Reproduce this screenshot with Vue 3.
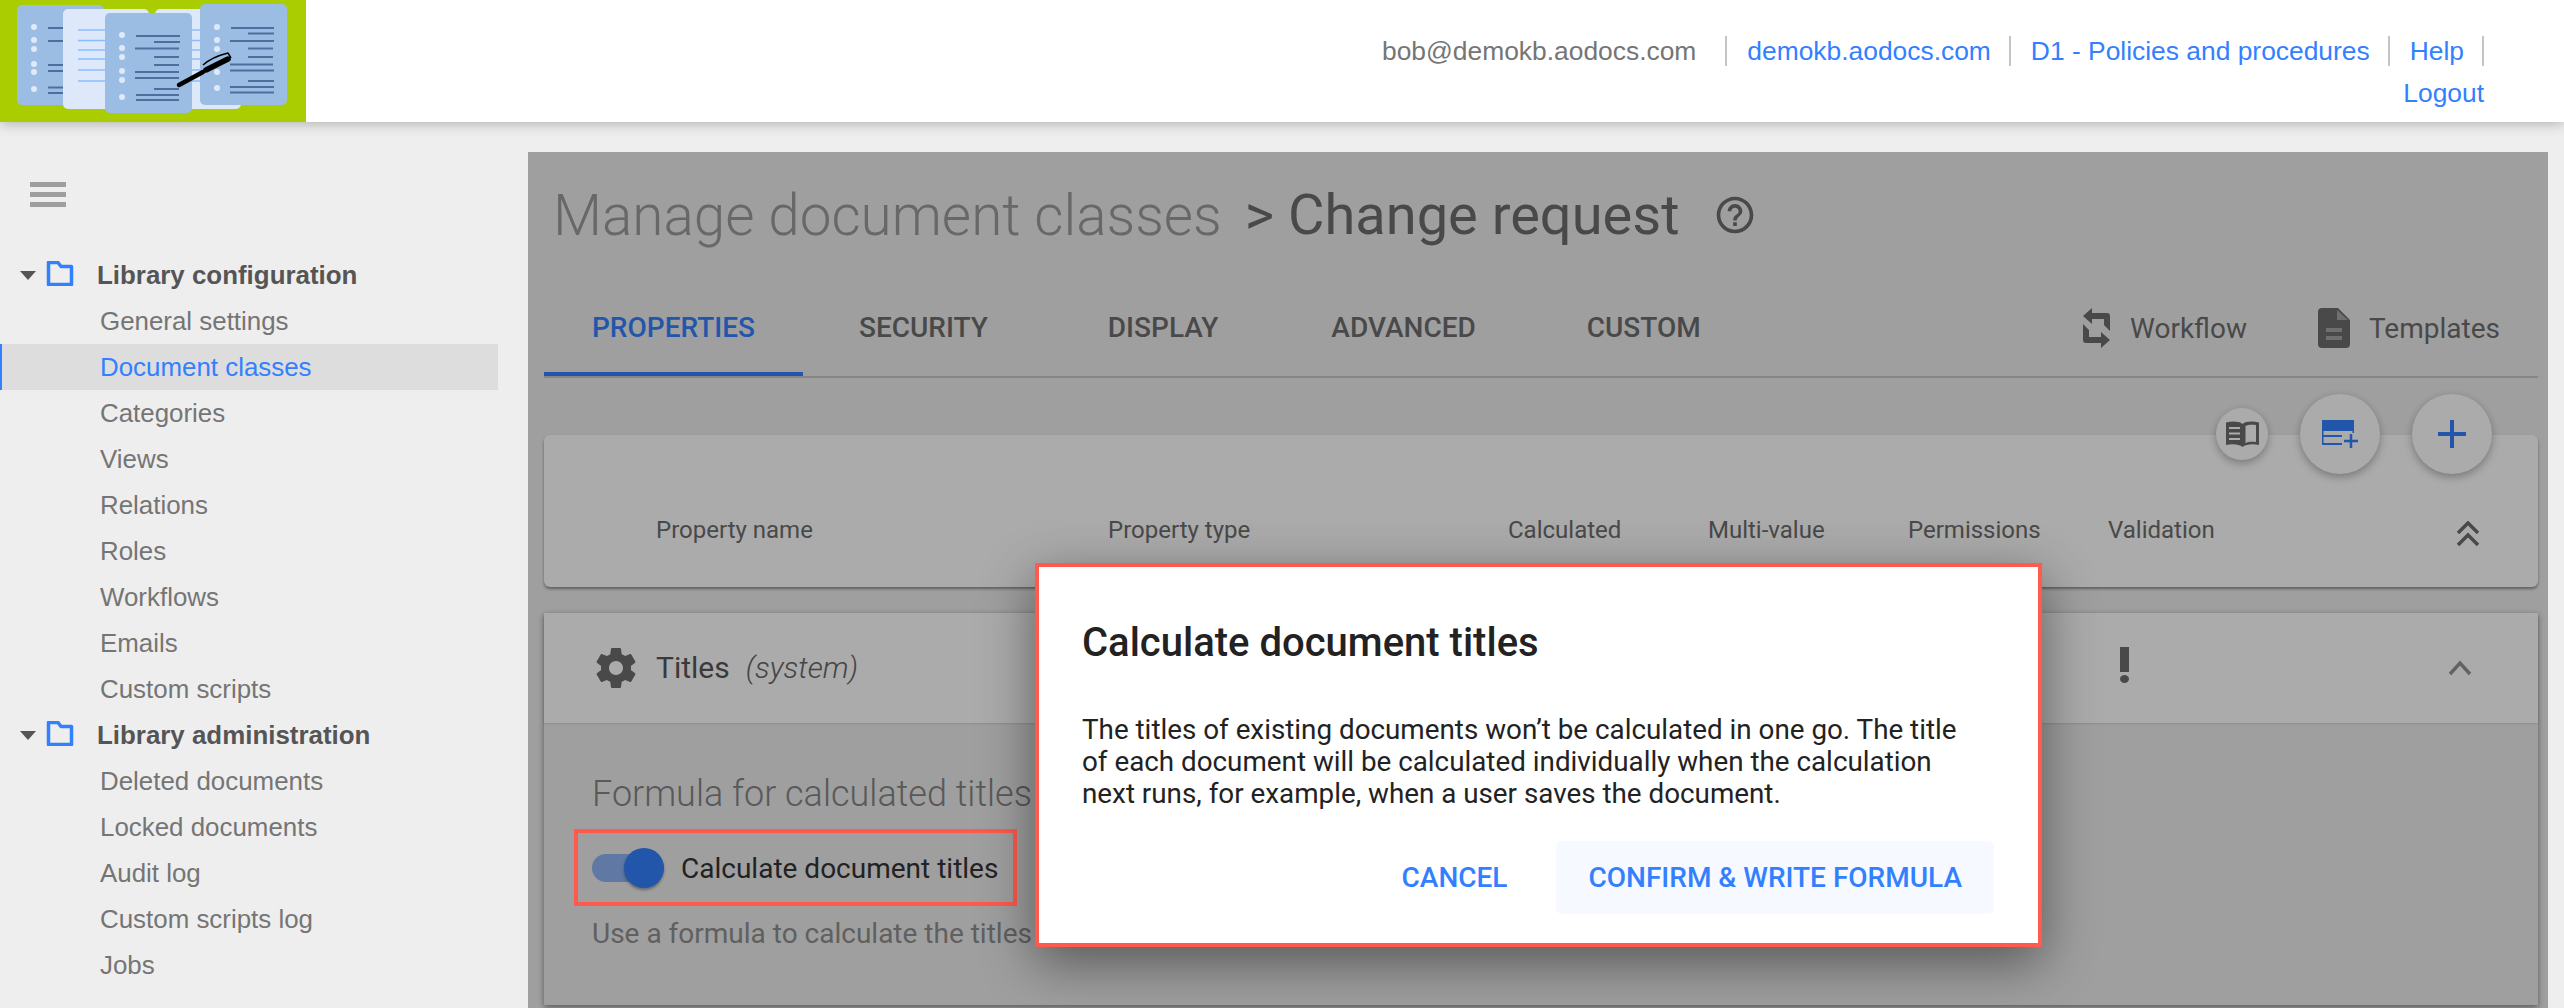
<script setup>
const configItems = ['General settings', 'Document classes', 'Categories', 'Views', 'Relations', 'Roles', 'Workflows', 'Emails', 'Custom scripts']
const adminItems = ['Deleted documents', 'Locked documents', 'Audit log', 'Custom scripts log', 'Jobs']
const tabs = ['PROPERTIES', 'SECURITY', 'DISPLAY', 'ADVANCED', 'CUSTOM']
const columns = ['Property name', 'Property type', 'Calculated', 'Multi-value', 'Permissions', 'Validation']
const ys = {
  s1: [28, 41, 65, 71, 87.5, 93],
  s2: [30, 40.5, 50, 59, 70, 81],
  d1: [27, 40, 49, 64, 72, 89],
  d3: [35, 48, 57, 71, 80, 97],
  d5: [27, 40, 49, 72, 88]
}
const s3Lines = [[136, 180, 36], [154, 180, 42], [135, 179, 48.5], [154, 179, 57], [154, 179, 65], [135, 179, 72], [135, 179, 78], [154, 179, 89], [136, 179, 95], [136, 179, 100]]
const s5Lines = [[231, 274, 28], [248, 274, 33.5], [230, 274, 41], [248, 273, 48.5], [248, 273, 57], [230, 273, 64.5], [230, 274, 70.5], [248, 274, 81], [230, 274, 87], [230, 274, 92.5]]
</script>

<template>
  <div class="page">
    <header class="topbar">
      <svg class="logo" width="306" height="122" viewBox="0 0 306 122">
        <rect width="306" height="122" fill="#a9cd00" />
        <rect x="17" y="5" width="87" height="100" rx="5" fill="#9bbde3" />
        <g fill="#dfe9fa"><circle v-for="y in ys.d1" :key="y" cx="34" :cy="y" r="3" /></g>
        <g stroke="#4d6f9e" stroke-width="2"><line v-for="y in ys.s1" :key="y" x1="48" x2="64" :y1="y" :y2="y" /></g>
        <rect x="63" y="9" width="86" height="100" rx="5" fill="#dde8fb" />
        <rect x="155" y="9" width="86" height="100" rx="5" fill="#dde8fb" />
        <g stroke="#88bcff" stroke-width="1.5">
          <line v-for="y in ys.s2" :key="y" x1="78" x2="108" :y1="y" :y2="y" />
          <line v-for="y in ys.s2" :key="'r' + y" x1="190" x2="202" :y1="y" :y2="y" />
        </g>
        <rect x="105" y="13" width="87" height="100" rx="5" fill="#9bbde3" />
        <g fill="#dfe9fa"><circle v-for="y in ys.d3" :key="y" cx="122" :cy="y" r="3" /></g>
        <g stroke="#4d6f9e" stroke-width="2"><line v-for="l in s3Lines" :key="l[2]" :x1="l[0]" :x2="l[1]" :y1="l[2]" :y2="l[2]" /></g>
        <rect x="200" y="4" width="87" height="101" rx="5" fill="#9bbde3" />
        <g fill="#dfe9fa"><circle v-for="y in ys.d5" :key="y" cx="217" :cy="y" r="3" /></g>
        <g stroke="#4d6f9e" stroke-width="2"><line v-for="l in s5Lines" :key="l[2]" :x1="l[0]" :x2="l[1]" :y1="l[2]" :y2="l[2]" /></g>
        <path d="M179 85 L203 72" stroke="#000" stroke-width="4.5" stroke-linecap="round" />
        <path d="M206 70 L228 59" stroke="#000" stroke-width="5.5" stroke-linecap="round" />
        <path d="M203 65 Q212 57 228 53 L231 58" stroke="#000" stroke-width="1.5" fill="none" />
      </svg>
      <nav class="usernav">
        <span class="nav-item nav-user">bob@demokb.aodocs.com</span>
        <a class="nav-item">demokb.aodocs.com</a>
        <a class="nav-item">D1 - Policies and procedures</a>
        <a class="nav-item">Help</a>
        <a class="nav-item nav-last">Logout</a>
      </nav>
    </header>

    <div class="content">
      <aside class="sidebar">
        <div class="hamburger"><i></i><i></i><i></i></div>
        <section class="group">
          <div class="group-head">
            <span class="caret"></span>
            <svg class="folder" width="28" height="25" viewBox="0 0 28 25"><path d="M2.5 23.500V1.500H12l3 4h10.500V23.500Z" fill="none" stroke="#3380ff" stroke-width="3.500" stroke-linejoin="round" /></svg>
            <span>Library configuration</span>
          </div>
          <a v-for="item in configItems" :key="item" class="side-item" :class="{ active: item === 'Document classes' }">{{ item }}</a>
        </section>
        <section class="group">
          <div class="group-head">
            <span class="caret"></span>
            <svg class="folder" width="28" height="25" viewBox="0 0 28 25"><path d="M2.5 23.500V1.500H12l3 4h10.500V23.500Z" fill="none" stroke="#3380ff" stroke-width="3.500" stroke-linejoin="round" /></svg>
            <span>Library administration</span>
          </div>
          <a v-for="item in adminItems" :key="item" class="side-item">{{ item }}</a>
        </section>
      </aside>

      <main class="main">
        <h1 class="title">
          <span class="crumb">Manage document classes</span>
          <span class="current">&gt; Change request</span>
          <svg class="help" width="44" height="44" viewBox="0 0 24 24"><path fill="#6e6e6e" d="M11 18h2v-2h-2v2zm1-16C6.480 2 2 6.480 2 12s4.480 10 10 10 10-4.480 10-10S17.520 2 12 2zm0 18c-4.410 0-8-3.590-8-8s3.590-8 8-8 8 3.590 8 8-3.590 8-8 8zm0-14c-2.210 0-4 1.790-4 4h2c0-1.100.9-2 2-2s2 .9 2 2c0 2-3 1.750-3 5h2c0-2.250 3-2.500 3-5 0-2.210-1.790-4-4-4z" /></svg>
        </h1>

        <div class="tabbar">
          <div v-for="tab in tabs" :key="tab" class="tab" :class="{ selected: tab === 'PROPERTIES' }">{{ tab }}</div>
          <div class="tab-actions">
            <span class="action">
              <svg width="28" height="40" viewBox="0 0 28 40"><path fill="#6e6e6e" d="M0 8L9 0V5H24Q27 5 27 8V23L21 17V11H9V16ZM0 16L6 22V29H18V24L27 32 18 40V35H3Q0 35 0 32Z" /></svg>
              <span class="action-label">Workflow</span>
            </span>
            <span class="action">
              <svg width="32" height="40" viewBox="0 0 32 40"><path fill="#6e6e6e" d="M4 0H20L32 12V36a4 4 0 0 1-4 4H4a4 4 0 0 1-4-4V4a4 4 0 0 1 4-4Z" /><path fill="#a6a6a6" d="M19 2v10h11L19 2ZM8 20h16v4H8zM8 28h16v4H8z" /></svg>
              Templates
            </span>
          </div>
        </div>

        <div class="fabs">
          <button class="fab fab-small">
            <svg width="33" height="26" viewBox="0 0 33 26"><path fill="#6e6e6e" d="M16.500 3C13 0 6 0 0 1.500V24C6 22.500 13 23 16.500 26 20 23 27 22.500 33 24V1.500C27 0 20 0 16.500 3Z" /><path fill="#fff" d="M19.500 5C22 3.500 26 3.500 30 4V21C26 20.500 22 20.500 19.500 22Z" /><path stroke="#fff" stroke-width="2" d="M3 7H14M3 12.500H14M3 18H14" /></svg>
          </button>
          <button class="fab">
            <svg width="36" height="28" viewBox="0 0 36 28"><path fill="#3380ff" d="M0 0H32V11H0Z" /><path fill="none" stroke="#3380ff" stroke-width="1.500" d="M.75 10V25M31.250 10V13" /><path stroke="#3380ff" stroke-width="2" d="M0 16H20M0 24H20" /><path stroke="#3380ff" stroke-width="2.500" d="M29 14V28M22 21H36" /></svg>
          </button>
          <button class="fab">
            <svg width="28" height="28" viewBox="0 0 28 28"><path stroke="#3380ff" stroke-width="4" d="M14 0V28M0 14H28" /></svg>
          </button>
        </div>

        <section class="card columns-card">
          <div class="columns">
            <span v-for="col in columns" :key="col">{{ col }}</span>
          </div>
          <svg class="double-chevron" width="24" height="26" viewBox="0 0 24 26"><path fill="none" stroke="#6e6e6e" stroke-width="3.500" d="M2 12L12 2l10 10M2 24l10-10 10 10" /></svg>
        </section>

        <section class="card titles-card">
          <div class="titles-head">
            <svg width="40" height="40" viewBox="2 2 20 20"><path fill="#6e6e6e" d="M19.430 12.980c.04-.32.07-.64.07-.98s-.03-.66-.07-.98l2.110-1.650c.19-.15.24-.42.12-.64l-2-3.460c-.12-.22-.39-.3-.61-.22l-2.490 1c-.52-.4-1.080-.73-1.690-.98l-.38-2.650C14.460 2.180 14.250 2 14 2h-4c-.25 0-.46.180-.49.420l-.38 2.650c-.61.25-1.170.59-1.690.98l-2.490-1c-.23-.09-.49 0-.61.220l-2 3.460c-.13.220-.07.490.12.640l2.110 1.650c-.04.320-.07.650-.07.980s.03.660.07.980l-2.110 1.650c-.19.150-.24.420-.12.640l2 3.460c.12.220.39.300.61.220l2.490-1c.52.400 1.080.730 1.690.980l.38 2.650c.03.240.24.420.49.420h4c.25 0 .46-.180.49-.420l.38-2.650c.61-.250 1.170-.590 1.690-.980l2.490 1c.23.090.49 0 .61-.220l2-3.460c.12-.220.07-.490-.12-.640l-2.110-1.650zM12 15.500c-1.930 0-3.500-1.570-3.500-3.500s1.570-3.500 3.500-3.500 3.500 1.570 3.500 3.500-1.570 3.500-3.500 3.500z" /></svg>
            <span class="titles-name">Titles</span>
            <em class="titles-note">(system)</em>
            <span class="bang"><i></i><b></b></span>
            <svg class="chevron-up" width="24" height="16" viewBox="0 0 24 16"><path fill="none" stroke="#949494" stroke-width="3.500" d="M2 14L12 3l10 11" /></svg>
          </div>
          <div class="titles-body">
            <h2>Formula for calculated titles</h2>
            <div class="toggle-row">
              <span class="toggle"><i></i></span>
              <span>Calculate document titles</span>
            </div>
            <p>Use a formula to calculate the titles of documents</p>
          </div>
        </section>

        <div class="scrim"></div>
        <div class="callout"></div>

        <div class="dialog">
          <h3>Calculate document titles</h3>
          <p>The titles of existing documents won’t be calculated in one go. The title of each document will be calculated individually when the calculation next runs, for example, when a user saves the document.</p>
          <div class="dialog-actions">
            <button class="btn">CANCEL</button>
            <button class="btn btn-tonal">CONFIRM &amp; WRITE FORMULA</button>
          </div>
        </div>
      </main>
    </div>
  </div>
</template>

<style>
html, body { margin: 0; background: #eee; overflow: hidden; }
</style>

<style scoped>
.page { width: 2564px; height: 1008px; background: #eee; overflow: hidden; display: flex; flex-direction: column; }

.topbar { height: 122px; flex: none; background: #fff; display: flex; justify-content: space-between; box-shadow: 0 2px 12px rgba(0, 0, 0, .25); position: relative; z-index: 2; }
.logo { display: block; }
.usernav { width: 1110px; margin: 36px 80px 0 0; display: flex; flex-wrap: wrap; justify-content: flex-end; align-content: flex-start; row-gap: 12px; font: 26.400px/30px "Liberation Sans", Arial, sans-serif; color: #3380ff; }
.nav-item { padding-right: 18px; margin-right: 20px; border-right: 2px solid #c4c4c4; white-space: nowrap; }
.usernav .nav-item:nth-child(4) { margin-right: 0; }
.nav-user { color: #757575; padding-right: 29px; }
.nav-last { border: 0; padding: 0; margin: 0; }

.content { flex: 1; display: flex; min-height: 0; }
.sidebar { width: 528px; flex: none; font: 25.900px/46px "Liberation Sans", Arial, sans-serif; color: #757575; box-sizing: border-box; padding-top: 60px; }
.hamburger { margin: 0 0 45px 30px; width: 36px; display: flex; flex-direction: column; gap: 5px; }
.hamburger i { height: 5px; background: #9e9e9e; display: block; }
.group-head { height: 46px; display: flex; align-items: center; color: #555; font-weight: 700; padding-left: 20px; }
.caret { width: 0; height: 0; border: 8px solid transparent; border-top: 9px solid #555; border-bottom: 0; margin-right: 10px; }
.folder { margin-right: 23px; margin-top: -4px; }
.side-item { display: block; height: 46px; padding-left: 100px; width: 498px; box-sizing: border-box; }
.side-item.active { background: #ddd; color: #3380ff; border-left: 2px solid #3380ff; padding-left: 98px; }

.main { width: 2020px; flex: none; margin-top: 30px; height: 856px; background: #eee; position: relative; overflow: hidden; box-sizing: border-box; padding: 0 10px 0 16px; font-family: Roboto, sans-serif; }
.title { margin: 0; height: 126px; padding-left: 9px; display: flex; align-items: center; font-size: 56.600px; font-weight: 300; white-space: nowrap; }
.crumb { color: #9c9c9c; }
.current { color: #6e6e6e; font-weight: 400; font-size: 56px; margin-left: 23px; }
.help { margin-left: 34px; }

.tabbar { height: 98px; display: flex; border-bottom: 2px solid #c8c8c8; font-size: 28px; font-weight: 500; color: #6e6e6e; }
.tab { padding: 30px 48px 0; box-sizing: border-box; height: 98px; line-height: 40px; }
.tab.selected { color: #3380ff; border-bottom: 4px solid #3380ff; }
.tab:nth-child(2) { margin-left: 8px; }
.tab:nth-child(3) { margin-left: 24px; }
.tab:nth-child(4) { margin-left: 17px; }
.tab:nth-child(5) { margin-left: 15px; }
.tab-actions { margin-left: auto; display: flex; gap: 71px; padding: 29px 38px 0 0; font-weight: 400; font-size: 28px; }
.action { display: flex; align-items: center; gap: 19px; height: 42px; }

.fabs { position: absolute; left: 1688px; top: 242px; width: 276px; height: 80px; display: flex; align-items: center; z-index: 1; }
.fab { width: 80px; height: 80px; border-radius: 50%; border: 0; background: #fff; box-shadow: 0 3px 8px rgba(0, 0, 0, .3); display: flex; align-items: center; justify-content: center; padding: 0; margin-left: 32px; flex: none; }
.fab-small { width: 52px; height: 52px; margin-left: 0; }

.card { background: #fff; border-radius: 6px; box-shadow: 0 2px 3px rgba(0, 0, 0, .4); }
.columns-card { height: 152px; margin-top: 57px; position: relative; }
.columns { display: grid; grid-template-columns: 452px 400px 200px 200px 200px 200px; padding: 79px 0 0 112px; font-size: 24px; line-height: 32px; color: #6e6e6e; }
.double-chevron { position: absolute; left: 1912px; top: 86px; }

.titles-card { margin-top: 26px; height: 392px; background: #eee; border-radius: 0; box-shadow: 0 2px 6px rgba(0, 0, 0, .45); }
.titles-head { height: 110px; background: #fff; display: flex; align-items: center; padding-left: 52px; font-size: 30px; color: #666; position: relative; box-shadow: 0 1px 2px rgba(0, 0, 0, .12); }
.titles-name { margin-left: 20px; margin-top: -2px; color: #575757; }
.titles-note { margin-left: 16px; margin-top: -2px; font-style: italic; font-weight: 300; }
.bang { position: absolute; left: 1576px; top: 34px; width: 9px; }
.bang i { display: block; height: 25px; background: #6e6e6e; }
.bang b { display: block; height: 8px; margin-top: 3px; border-radius: 50%; background: #6e6e6e; }
.chevron-up { position: absolute; left: 1904px; top: 47px; }
.titles-body { padding: 47px 0 0 48px; }
.titles-body h2 { margin: 0; font-size: 36px; line-height: 48px; font-weight: 300; color: #858585; white-space: nowrap; }
.toggle-row { margin-top: 26px; height: 48px; display: flex; align-items: center; gap: 17px; font-size: 28px; color: #333; }
.toggle { width: 72px; height: 28px; border-radius: 14px; background: #8eb5f5; position: relative; display: block; }
.toggle i { position: absolute; right: 0; top: -6px; width: 40px; height: 40px; border-radius: 50%; background: #3380ff; box-shadow: 0 2px 3px rgba(0, 0, 0, .35); }
.titles-body p { margin: 22px 0 0; font-size: 28px; line-height: 40px; color: #8f8f8f; white-space: nowrap; }

.scrim { position: absolute; inset: 0; background: rgba(0, 0, 0, .33); z-index: 3; }
.callout { position: absolute; left: 46px; top: 677px; width: 443px; height: 77px; box-sizing: border-box; border: 4px solid #ff5a4d; z-index: 4; }

.dialog { position: absolute; left: 507px; top: 411px; width: 1007px; height: 384px; box-sizing: border-box; background: #fff; border: 4px solid #ff5a4d; box-shadow: 0 16px 50px rgba(0, 0, 0, .45); z-index: 5; padding: 54px 43px 0; color: #222; }
.dialog h3 { margin: 0; font-size: 40px; line-height: 44px; font-weight: 500; }
.dialog p { margin: 49px 0 0; width: 895px; font-size: 27.800px; line-height: 32px; }
.dialog-actions { position: absolute; right: 44px; bottom: 29px; display: flex; align-items: center; gap: 49px; }
.btn { border: 0; background: none; color: #3380ff; font: 500 28px/73px Roboto, sans-serif; padding: 0; border-radius: 6px; }
.btn-tonal { background: #f6f9ff; padding: 0 32px; height: 73px; }
</style>
